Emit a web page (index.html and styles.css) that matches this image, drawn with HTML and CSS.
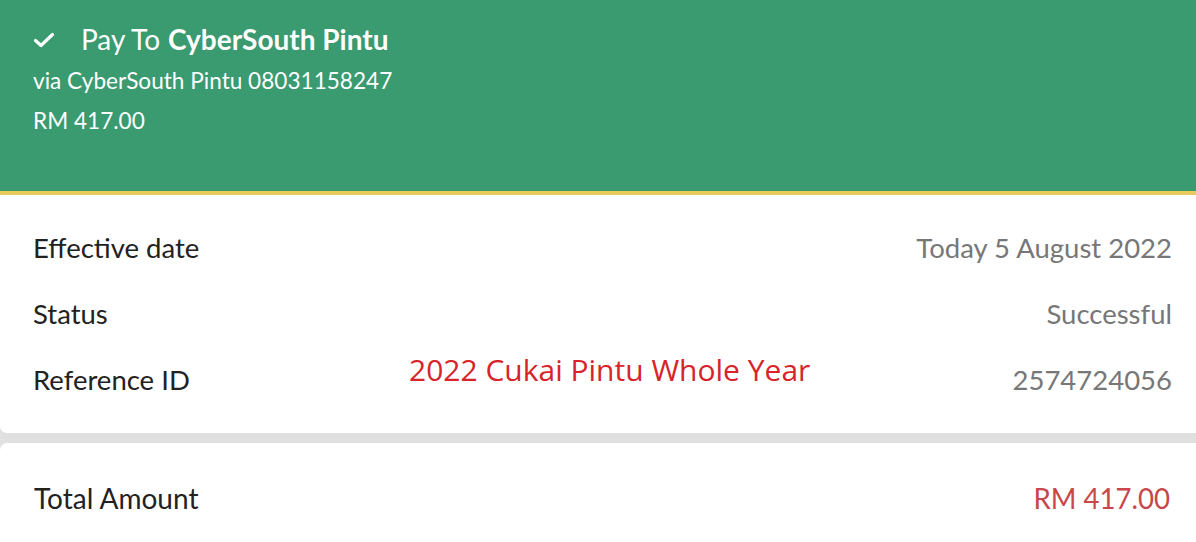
FILE: index.html
```html
<!DOCTYPE html>
<html>
<head>
<meta charset="utf-8">
<link rel="stylesheet" href="styles.css">
</head>
<body>
<div class="page">
  <header class="hero">
    <div class="pay-line">
      <svg class="check" width="22" height="16" viewBox="0 0 22 16"><path d="M2.5 8.5 L8 13.5 L19.5 2.5" fill="none" stroke="#fff" stroke-width="3.2" stroke-linecap="round" stroke-linejoin="round"/></svg>
      <span class="pay-to">Pay To</span>
      <span class="payee">CyberSouth Pintu</span>
    </div>
    <div class="sub first">via CyberSouth Pintu 08031158247</div>
    <div class="sub">RM 417.00</div>
  </header>
  <section class="card details">
    <div class="row"><span class="label">Effective date</span><span class="value">Today 5 August 2022</span></div>
    <div class="row"><span class="label">Status</span><span class="value">Successful</span></div>
    <div class="row ref"><span class="label">Reference ID</span><span class="note">2022 Cukai Pintu Whole Year</span><span class="value">2574724056</span></div>
  </section>
  <section class="card total">
    <span class="total-label">Total Amount</span>
    <span class="total-value">RM 417.00</span>
  </section>
</div>
</body>
</html>
```
FILE: styles.css
```css
* { box-sizing: border-box; }
html, body { margin: 0; padding: 0; }
body {
  width: 1196px;
  height: 542px;
  overflow: hidden;
  background: #e0e0e0;
  font-family: Lato, "Open Sans", sans-serif;
}
.page { display: flex; flex-direction: column; }
.hero {
  background: #3a9a70;
  color: #fff;
  height: 195px;
  border-bottom: 4px solid #e9c95b;
  padding: 19px 0 0 33px;
}
.pay-line {
  display: flex;
  align-items: center;
  height: 40px;
  font-size: 28px;
}
.check { margin-right: 26px; margin-top: 2px; }
.pay-to { margin-right: 8px; }
.payee { font-weight: 700; }
.sub {
  font-size: 22.6px;
  height: 40px;
  line-height: 40px;
}
.sub.first { margin-top: 2px; }
.card {
  background: #fff;
  margin-right: -12px;
  border-radius: 7px;
}
.details {
  border-top-left-radius: 0;
  border-top-right-radius: 0;
  height: 238px;
  padding: 19px 36px 0 33px;
  display: flex;
  flex-direction: column;
}
.row {
  display: flex;
  align-items: center;
  justify-content: space-between;
  height: 66px;
  font-size: 27.5px;
  position: relative;
}
.label { color: #222; }
.value { color: #777; }
.note {
  position: absolute;
  left: 376px;
  top: 3px;
  font-family: "Open Sans", "Noto Sans", sans-serif;
  font-size: 30px;
  color: #d8232a;
}
.total {
  margin-top: 10px;
  height: 120px;
  display: flex;
  align-items: center;
  justify-content: space-between;
  padding: 0 38px 12px 34px;
  font-size: 28px;
}
.total-label {
  color: #222;
  display: inline-block;
  transform: scaleY(1.05);
}
.total-value {
  color: #c8474b;
  display: inline-block;
  font-size: 27.6px;
  transform: scaleY(1.05);
}
```
